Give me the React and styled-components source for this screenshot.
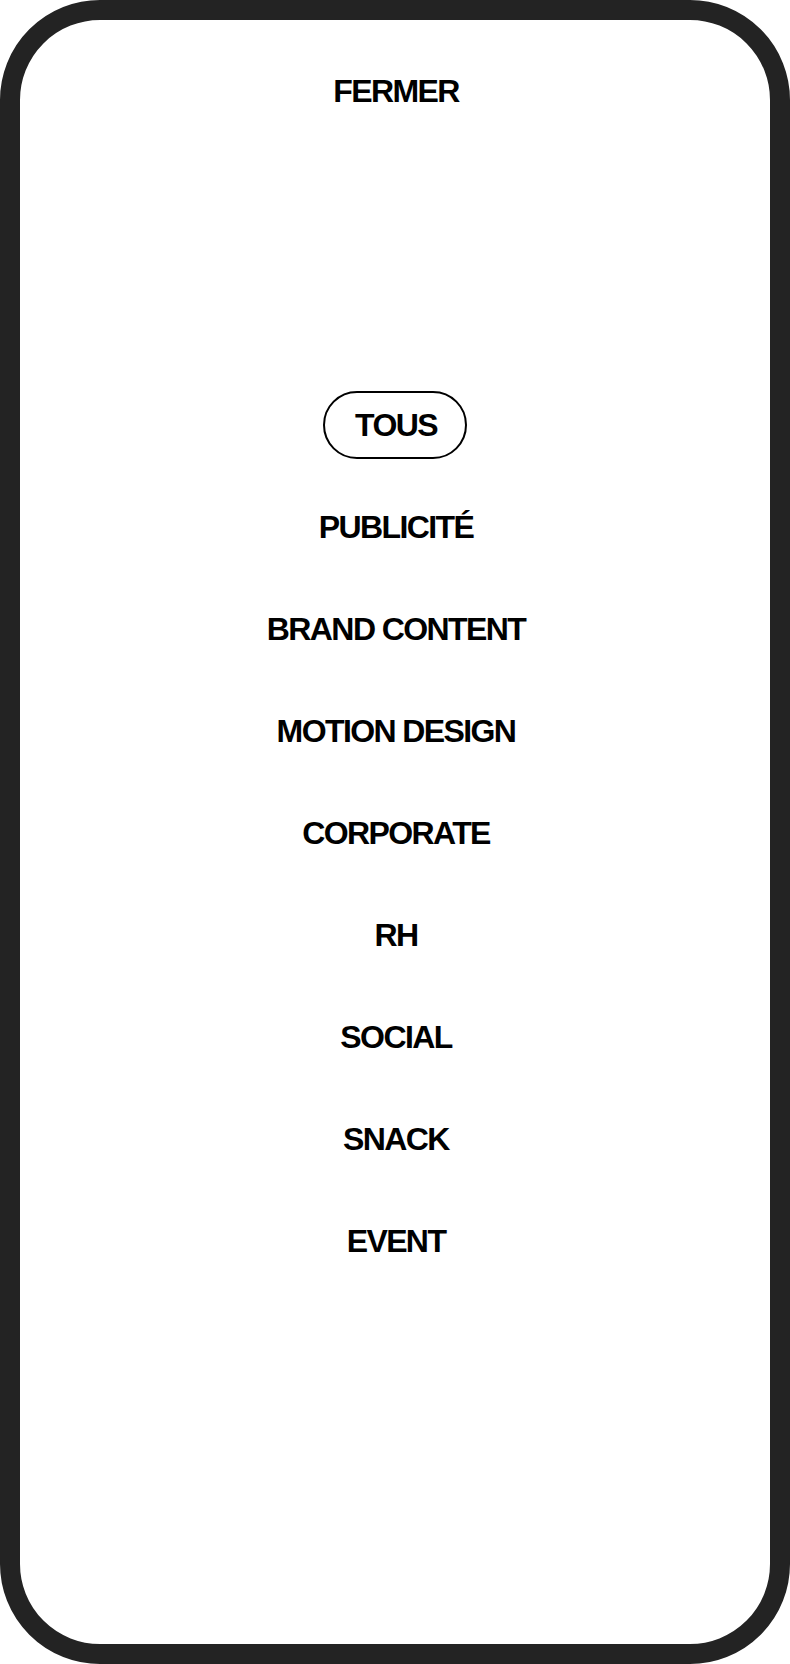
import React, { useState } from "react";
import styled, { createGlobalStyle } from "styled-components";

const Global = createGlobalStyle`
  * { box-sizing: border-box; }
  html, body { margin: 0; padding: 0; background: #ffffff; }
  body { font-family: "Liberation Sans", Arial, sans-serif; }
`;

const Frame = styled.div`
  width: 790px;
  height: 1664px;
  border: 20px solid #232323;
  border-radius: 100px;
  background: #ffffff;
  display: flex;
  flex-direction: column;
  align-items: center;
  padding-top: 37px;
`;

const Label = styled.button`
  appearance: none;
  background: transparent;
  font-family: "Liberation Sans", Arial, sans-serif;
  font-weight: 700;
  font-size: 32px;
  letter-spacing: -1.6px;
  color: #000000;
  height: 68px;
  line-height: 1;
  padding: 0 28px 0 30px;
  border-radius: 34px;
  border: 2px solid ${(p) => (p.$active ? "#000000" : "transparent")};
  display: flex;
  align-items: center;
  justify-content: center;
  cursor: pointer;
  white-space: nowrap;
`;

const Nav = styled.nav`
  margin-top: 266px;
  display: flex;
  flex-direction: column;
  align-items: center;
  gap: 34px;
`;

const items = [
  "TOUS",
  "PUBLICITÉ",
  "BRAND CONTENT",
  "MOTION DESIGN",
  "CORPORATE",
  "RH",
  "SOCIAL",
  "SNACK",
  "EVENT",
];

export default function App() {
  const [active, setActive] = useState(0);
  return (
    <>
      <Global />
      <Frame>
        <Label>FERMER</Label>
        <Nav>
          {items.map((it, i) => (
            <Label key={it} $active={i === active} onClick={() => setActive(i)}>
              {it}
            </Label>
          ))}
        </Nav>
      </Frame>
    </>
  );
}
